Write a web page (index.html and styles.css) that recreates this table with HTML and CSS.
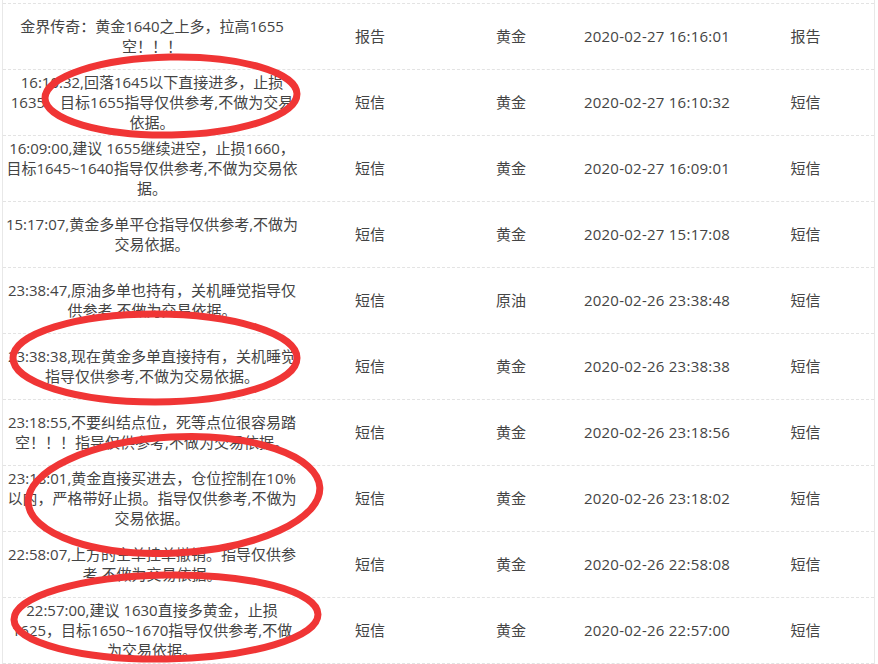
FILE: index.html
```html
<!DOCTYPE html>
<html lang="zh-CN">
<head>
<meta charset="utf-8">
<title>短信列表</title>
<link rel="stylesheet" href="styles.css">
</head>
<body>
<div class="page">
  <div class="table">
    <div class="row">
      <div class="cell msg">金界传奇：黄金1640之上多，拉高1655<br>空！！！</div>
      <div class="cell type">报告</div>
      <div class="cell kind">黄金</div>
      <div class="cell date">2020-02-27 16:16:01</div>
      <div class="cell src">报告</div>
    </div>
    <div class="row">
      <div class="cell msg">16:10:32,回落1645以下直接进多，止损<br>1635，目标1655指导仅供参考,不做为交易<br>依据。</div>
      <div class="cell type">短信</div>
      <div class="cell kind">黄金</div>
      <div class="cell date">2020-02-27 16:10:32</div>
      <div class="cell src">短信</div>
    </div>
    <div class="row">
      <div class="cell msg">16:09:00,建议 1655继续进空，止损1660，<br>目标1645~1640指导仅供参考,不做为交易依<br>据。</div>
      <div class="cell type">短信</div>
      <div class="cell kind">黄金</div>
      <div class="cell date">2020-02-27 16:09:01</div>
      <div class="cell src">短信</div>
    </div>
    <div class="row">
      <div class="cell msg">15:17:07,黄金多单平仓指导仅供参考,不做为<br>交易依据。</div>
      <div class="cell type">短信</div>
      <div class="cell kind">黄金</div>
      <div class="cell date">2020-02-27 15:17:08</div>
      <div class="cell src">短信</div>
    </div>
    <div class="row">
      <div class="cell msg">23:38:47,原油多单也持有，关机睡觉指导仅<br>供参考,不做为交易依据。</div>
      <div class="cell type">短信</div>
      <div class="cell kind">原油</div>
      <div class="cell date">2020-02-26 23:38:48</div>
      <div class="cell src">短信</div>
    </div>
    <div class="row">
      <div class="cell msg">23:38:38,现在黄金多单直接持有，关机睡觉<br>指导仅供参考,不做为交易依据。</div>
      <div class="cell type">短信</div>
      <div class="cell kind">黄金</div>
      <div class="cell date">2020-02-26 23:38:38</div>
      <div class="cell src">短信</div>
    </div>
    <div class="row">
      <div class="cell msg">23:18:55,不要纠结点位，死等点位很容易踏<br>空！！！指导仅供参考,不做为交易依据。</div>
      <div class="cell type">短信</div>
      <div class="cell kind">黄金</div>
      <div class="cell date">2020-02-26 23:18:56</div>
      <div class="cell src">短信</div>
    </div>
    <div class="row">
      <div class="cell msg">23:18:01,黄金直接买进去，仓位控制在10%<br>以内，严格带好止损。指导仅供参考,不做为<br>交易依据。</div>
      <div class="cell type">短信</div>
      <div class="cell kind">黄金</div>
      <div class="cell date">2020-02-26 23:18:02</div>
      <div class="cell src">短信</div>
    </div>
    <div class="row">
      <div class="cell msg">22:58:07,上方的空单挂单撤销。指导仅供参<br>考,不做为交易依据。</div>
      <div class="cell type">短信</div>
      <div class="cell kind">黄金</div>
      <div class="cell date">2020-02-26 22:58:08</div>
      <div class="cell src">短信</div>
    </div>
    <div class="row">
      <div class="cell msg">22:57:00,建议 1630直接多黄金，止损<br>1625，目标1650~1670指导仅供参考,不做<br>为交易依据。</div>
      <div class="cell type">短信</div>
      <div class="cell kind">黄金</div>
      <div class="cell date">2020-02-26 22:57:00</div>
      <div class="cell src">短信</div>
    </div>
  </div>
  <svg class="marks" width="878" height="664" viewBox="0 0 878 664" xmlns="http://www.w3.org/2000/svg">
    <g fill="none" stroke="#f03535" stroke-width="7">
      <ellipse cx="171" cy="96" rx="126" ry="39" transform="rotate(-1 171 96)"/>
      <ellipse cx="155" cy="358" rx="142" ry="44"/>
      <ellipse cx="174" cy="495" rx="146" ry="58" transform="rotate(-3 174 495)"/>
      <ellipse cx="166" cy="617" rx="152" ry="42" transform="rotate(-1 166 617)"/>
    </g>
  </svg>
</div>
</body>
</html>
```
FILE: styles.css
```css
html, body {
  margin: 0;
  padding: 0;
  background: #ffffff;
  overflow: hidden;
}

.page {
  position: relative;
  width: 878px;
  height: 664px;
  font-family: "Open Sans", "Noto Sans CJK SC", sans-serif;
  font-size: 15px;
  color: #444444;
}

.table {
  margin-left: 2px;
  width: 871px;
  padding-top: 3px;
  border-left: 1px solid #e8e8e8;
  border-right: 1px solid #e8e8e8;
}

.row {
  display: grid;
  grid-template-columns: 304px 126px 156px 130px 155px;
  height: 65px;
  border-top: 1px dashed #e3e3e3;
}

.row:last-child {
  border-bottom: 1px dashed #e3e3e3;
}

.cell {
  display: flex;
  align-items: center;
  justify-content: center;
  text-align: center;
  white-space: nowrap;
  line-height: 20px;
  padding-bottom: 2px;
}

.msg {
  padding-right: 6px;
}

.date {
  padding-left: 6px;
  letter-spacing: 0.25px;
}

.src {
  padding-left: 18px;
}

.marks {
  position: absolute;
  top: 0;
  left: 0;
  pointer-events: none;
}
```
